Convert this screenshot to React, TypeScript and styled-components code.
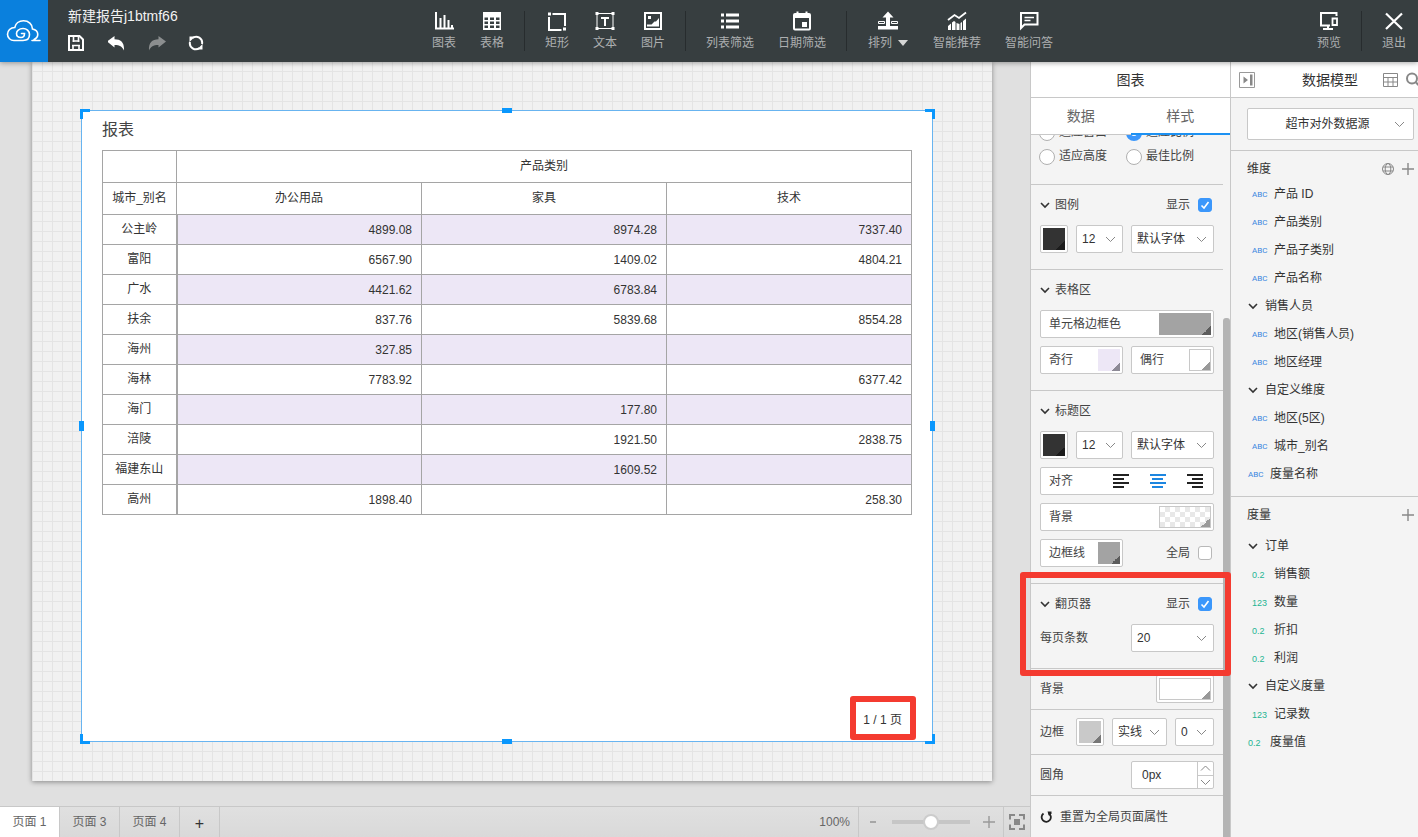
import React from "react";
import styled, { createGlobalStyle, css } from "styled-components";

const GlobalStyle = createGlobalStyle`
  * { box-sizing: border-box; }
  body {
    margin: 0;
    font-family: "Liberation Sans", "Noto Sans CJK SC", sans-serif;
    font-size: 12px;
    color: #444;
  }
  button, input, select { font: inherit; color: inherit; margin: 0; }
  button { border: 0; padding: 0; background: none; cursor: pointer; }
  h1, h2, h3, ul { margin: 0; padding: 0; font-weight: normal; }
  ul { list-style: none; }
`;

const line = "#c8c8c8";
const blue = "#1c91f2";

/* ---------- frame ---------- */

const Shell = styled.div`
  display: flex;
  flex-direction: column;
  height: 100vh;
  overflow: hidden;
  background: #e0e0e0;
`;

const TopBar = styled.header`
  display: flex;
  flex: none;
  height: 62px;
  background: #373e40;
  box-shadow: 0 1px 5px rgba(0, 0, 0, 0.35);
  position: relative;
  z-index: 5;
`;

const Body = styled.div`
  display: flex;
  flex: 1;
  min-height: 0;
`;

/* ---------- top bar ---------- */

const Logo = styled.a`
  display: flex;
  align-items: center;
  justify-content: center;
  flex: none;
  width: 48px;
  background: #0a80dd;
`;

const ReportBox = styled.div`
  display: flex;
  flex-direction: column;
  width: 372px;
  padding: 7px 20px 0;
`;

const ReportName = styled.h1`
  font-size: 14px;
  line-height: 18px;
  color: #f2f2f2;
`;

const QuickActions = styled.div`
  display: flex;
  gap: 20px;
  margin-top: 8px;
`;

const QuickButton = styled.button`
  display: flex;
  width: 20px;
  height: 20px;
  align-items: center;
  color: ${(p) => (p.disabled ? "#8b8e8f" : "#fff")};
`;

const Tools = styled.div`
  display: flex;
  align-items: center;
`;

const Spacer = styled.div`
  flex: 1;
`;

const ToolButton = styled.button<{ $width: number }>`
  display: flex;
  flex-direction: column;
  align-items: center;
  gap: 3px;
  width: ${(p) => p.$width}px;
  height: 42px;
  padding-top: 1px;
  color: #fff;
`;

const ToolLabel = styled.span`
  display: flex;
  align-items: center;
  gap: 6px;
  line-height: 18px;
  color: #adafb0;
  white-space: nowrap;
`;

const Caret = styled.i`
  border: 5px solid transparent;
  border-top: 6px solid #d5d6d6;
  border-bottom: 0;
`;

const ToolDivider = styled.i`
  width: 1px;
  height: 40px;
  margin: 0 8px;
  background: #272c2e;
`;

/* ---------- canvas ---------- */

const Workspace = styled.main`
  display: flex;
  flex-direction: column;
  flex: 1;
  min-width: 0;
`;

const Stage = styled.div`
  flex: 1;
  min-height: 0;
  padding: 0 38px 25px 32px;
  display: flex;
`;

const ReportPage = styled.section`
  display: flex;
  flex: 1;
  padding: 48px 59px 39px 49px;
  background-color: #f1f1f1;
  background-image: linear-gradient(#e4e4e4 1px, transparent 1px),
    linear-gradient(90deg, #e4e4e4 1px, transparent 1px);
  background-size: 10px 10px;
  background-position: 0 9px;
  box-shadow: 0 1px 5px rgba(0, 0, 0, 0.4);
`;

const Widget = styled.article`
  position: relative;
  display: flex;
  flex-direction: column;
  flex: 1;
  padding: 9px 20px 2px;
  background: #fff;
  border: 1px solid #68b4f0;
`;

const WidgetTitle = styled.h2`
  font-size: 16px;
  line-height: 20px;
  color: #444;
`;

type Spot = "nw" | "n" | "ne" | "e" | "se" | "s" | "sw" | "w";

const spots: Record<Spot, ReturnType<typeof css>> = {
  nw: css`top: -2px; left: -2px; width: 10px; height: 10px; border-width: 3px 0 0 3px;`,
  ne: css`top: -2px; right: -3px; width: 10px; height: 10px; border-width: 3px 3px 0 0;`,
  sw: css`bottom: -3px; left: -2px; width: 10px; height: 10px; border-width: 0 0 3px 3px;`,
  se: css`bottom: -3px; right: -3px; width: 10px; height: 10px; border-width: 0 3px 3px 0;`,
  n: css`top: -3px; left: calc(50% - 5px); width: 10px; height: 5px; background: #0a97fd;`,
  s: css`bottom: -3px; left: calc(50% - 5px); width: 10px; height: 5px; background: #0a97fd;`,
  w: css`left: -3px; top: calc(50% - 5px); width: 5px; height: 10px; background: #0a97fd;`,
  e: css`right: -3px; top: calc(50% - 5px); width: 5px; height: 10px; background: #0a97fd;`,
};

const Handle = styled.i<{ $spot: Spot }>`
  position: absolute;
  border: 0 solid #0a97fd;
  ${(p) => spots[p.$spot]}
`;

const DataTable = styled.table`
  width: 100%;
  margin-top: 10px;
  table-layout: fixed;
  border-collapse: collapse;
  color: #333;

  th, td {
    padding: 0;
    border: 1px solid #a5a5a5;
    font-weight: normal;
    line-height: 16px;
  }
  thead tr { height: 32px; }
  tbody tr { height: 30px; }
  tbody tr:nth-child(odd) td { background: #ede7f6; }
  th { padding-bottom: 2px; }
  td {
    padding-right: 9px;
    text-align: right;
  }
  td:first-of-type { border-left-width: 2px; }
`;

const NameCol = styled.col`
  width: 74px;
`;

const Pager = styled.div`
  position: relative;
  align-self: flex-end;
  margin: auto -5px -2px 0;
  padding: 15px 13px 11px 12px;
  border: 2px solid transparent;
  line-height: 16px;
  color: #333;
`;

const PagerMark = styled.i`
  position: absolute;
  inset: -1px;
  border: 6px solid #f43b30;
  border-radius: 3px;
`;

/* ---------- bottom bar ---------- */

const BottomBar = styled.footer`
  display: flex;
  flex: none;
  height: 31px;
  border-top: 1px solid ${line};
  background: linear-gradient(#e0e0e0, #d9d9d9);
`;

const PageTab = styled.button<{ $active?: boolean }>`
  width: 60px;
  border-right: 1px solid ${line};
  background: ${(p) => (p.$active ? "#fff" : "transparent")};
  line-height: 16px;
  color: #666;
`;

const AddTab = styled(PageTab)`
  width: 40px;
  padding-top: 4px;
  font-size: 16px;
  color: #333;
`;

const ZoomValue = styled.span`
  padding: 0 8px;
  line-height: 31px;
  color: #666;
`;

const ZoomBox = styled.div`
  display: flex;
  align-items: center;
  justify-content: space-between;
  width: 146px;
  padding: 0 8px;
  border: solid ${line};
  border-width: 0 1px;
`;

const ZoomButton = styled.button`
  display: flex;
  justify-content: center;
  width: 12px;
  color: #999;
`;

const ZoomRange = styled.input`
  appearance: none;
  width: 78px;
  height: 16px;
  background: linear-gradient(#c6c6c6, #c6c6c6) center / 100% 4px no-repeat;

  &::-webkit-slider-thumb {
    appearance: none;
    width: 16px;
    height: 16px;
    border: 2px solid #ccc;
    border-radius: 8px;
    background: #fff;
  }
`;

const FitButton = styled.button`
  display: flex;
  align-items: center;
  justify-content: center;
  width: 26px;
`;

/* ---------- chart panel ---------- */

const ChartPanel = styled.aside`
  position: relative;
  z-index: 2;
  display: flex;
  flex-direction: column;
  flex: none;
  width: 200px;
  border-left: 1px solid ${line};
  background: #f4f4f4;
`;

const PanelHeader = styled.header`
  display: flex;
  align-items: center;
  justify-content: center;
  flex: none;
  height: 36px;
  border-bottom: 1px solid ${line};
  background: #fff;
  font-size: 14px;
  line-height: 18px;
  color: #333;
`;

const Tabs = styled.div`
  display: flex;
  flex: none;
  height: 37px;
  background: #fff;
`;

const Tab = styled.button<{ $active?: boolean }>`
  flex: 1;
  padding-bottom: ${(p) => (p.$active ? 1 : 2)}px;
  border-bottom: ${(p) => (p.$active ? `2px solid ${blue}` : `1px solid ${line}`)};
  font-size: 14px;
  color: #666;
`;

const ScrollArea = styled.div`
  display: flex;
  flex: 1;
  min-height: 0;
  overflow: hidden;
`;

const Settings = styled.div`
  display: flex;
  flex-direction: column;
  justify-content: flex-end;
  flex: 1;
`;

const ScrollTrack = styled.div`
  display: flex;
  align-items: flex-end;
  width: 7px;
`;

const ScrollThumb = styled.i`
  width: 7px;
  height: 74%;
  border-radius: 3px 3px 0 0;
  background: #b4b4b4;
`;

const Section = styled.section`
  display: flex;
  flex-direction: column;
  flex: none;
  gap: 8px;
  padding: 8px 9px 16px;
  border-bottom: 1px solid ${line};
`;

const RadioGrid = styled.section`
  display: grid;
  grid-template-columns: 87px 87px;
  flex: none;
  padding: 0 8px 15px;
  border-bottom: 1px solid ${line};
`;

const RadioLabel = styled.label`
  display: flex;
  gap: 4px;
  height: 24px;
  align-items: center;
  line-height: 20px;
  white-space: nowrap;

  span { padding-bottom: 2px; }
`;

const Radio = styled.input`
  appearance: none;
  flex: none;
  width: 16px;
  height: 16px;
  border: 1px solid #b0b0b0;
  border-radius: 8px;
  background: #fff;

  &:checked {
    border: 5px solid #3b97fb;
  }
`;

const SectionHead = styled.div`
  display: flex;
  align-items: center;
  justify-content: space-between;
  height: 24px;
`;

const Toggle = styled.button`
  display: flex;
  align-items: center;
  gap: 5px;
  line-height: 16px;
`;

const CheckLabel = styled.label`
  display: flex;
  align-items: center;
  gap: 8px;
  margin-right: 2px;
  line-height: 16px;
`;

const CheckBox = styled.span`
  position: relative;
  display: flex;

  input {
    appearance: none;
    width: 14px;
    height: 14px;
    border: 1px solid #b8b8b8;
    border-radius: 3px;
    background: #fff;
  }
  input:checked {
    border-color: #3b97fb;
    background: #3b97fb;
  }
  svg { position: absolute; inset: 0; }
`;

const Row = styled.div`
  display: flex;
  align-items: center;
  gap: 8px;
  justify-content: space-between;
`;

const RowText = styled.span`
  line-height: 16px;
`;

const FlatRow = styled(Row)<{ $height: number }>`
  flex: none;
  height: ${(p) => p.$height}px;
  padding: 0 9px;
  border-bottom: 1px solid ${line};
`;

const boxed = css`
  border: 1px solid ${line};
  border-radius: 2px;
  background: #fff;
`;

const ColorButton = styled.button<{ $width?: number }>`
  ${boxed}
  display: flex;
  align-items: center;
  justify-content: space-between;
  flex: ${(p) => (p.$width ? "none" : "1")};
  width: ${(p) => (p.$width ? `${p.$width}px` : "auto")};
  height: 28px;
  padding: 2px;
`;

const ColorText = styled(RowText)`
  padding-left: 6px;
  white-space: nowrap;
`;

const Swatch = styled.i<{ $fill: string; $corner: string; $wide?: boolean; $edge?: boolean }>`
  width: ${(p) => (p.$wide ? 52 : 22)}px;
  height: 22px;
  border: ${(p) => (p.$edge ? `1px solid ${line}` : "0")};
  background: linear-gradient(135deg, transparent 50%, ${(p) => p.$corner} 50%) bottom right / 9px 9px no-repeat,
    ${(p) => p.$fill};
`;

const SelectWrap = styled.span<{ $width: number; $inset: number }>`
  position: relative;
  display: flex;
  flex: none;
  width: ${(p) => p.$width}px;

  svg {
    position: absolute;
    right: ${(p) => p.$inset}px;
    top: 50%;
    transform: translateY(-50%);
    pointer-events: none;
  }
`;

const NativeSelect = styled.select<{ $centered?: boolean }>`
  ${boxed}
  appearance: none;
  width: 100%;
  height: ${(p) => (p.$centered ? 32 : 28)}px;
  padding: ${(p) => (p.$centered ? "0 8px 0 2px" : "0 5px")};
  color: #333;
  text-align-last: ${(p) => (p.$centered ? "center" : "left")};
`;

const AlignBox = styled.div`
  ${boxed}
  display: flex;
  align-items: center;
  height: 28px;
  padding: 0 10px 0 8px;

  span { flex: 1; }
`;

const AlignButton = styled.button<{ $active?: boolean }>`
  display: flex;
  margin-left: 21px;
  color: ${(p) => (p.$active ? "#1d86e0" : "#222")};
`;

const NumberBox = styled.div`
  ${boxed}
  display: flex;
  width: 83px;
  height: 28px;
`;

const NumberInput = styled.input`
  flex: 1;
  min-width: 0;
  padding: 0 10px;
  border: 0;
  background: none;
  color: #333;
`;

const Steps = styled.span`
  display: flex;
  flex-direction: column;
  width: 16px;
  border-left: 1px solid ${line};
`;

const StepButton = styled.button`
  display: flex;
  flex: 1;
  align-items: center;
  justify-content: center;

  & + & { border-top: 1px solid ${line}; }
`;

const ResetButton = styled.button`
  display: flex;
  align-items: center;
  flex: none;
  gap: 8px;
  height: 41px;
  padding: 0 9px;
`;

const SectionMark = styled.i`
  position: absolute;
  left: -11px;
  right: -1px;
  bottom: 161px;
  height: 104px;
  border: 6px solid #f43b30;
  border-radius: 3px;
  pointer-events: none;
`;

/* ---------- model panel ---------- */

const ModelPanel = styled.aside`
  display: flex;
  flex-direction: column;
  flex: none;
  width: 188px;
  border-left: 1px solid ${line};
  background: #f4f4f4;
  overflow: hidden;
`;

const ModelHeader = styled(PanelHeader)`
  justify-content: flex-start;
  padding-left: 8px;
  overflow: hidden;

  h2 { flex: 1; padding-left: 22px; font-size: 14px; text-align: center; }
  button { display: flex; flex: none; }
`;

const HeaderIcons = styled.div`
  display: flex;
  gap: 7px;
  margin-right: -4px;
`;

const SourceRow = styled.div`
  padding: 10px 4px 10px 16px;
  border-bottom: 1px solid ${line};
`;

const GroupHead = styled.div<{ $height: number }>`
  display: flex;
  align-items: center;
  gap: 8px;
  height: ${(p) => p.$height}px;
  padding: 0 4px 0 16px;
  color: #333;

  h3 { flex: 1; font-size: 12px; line-height: 16px; }
  button { display: flex; color: #888; }
`;

const FirstGroupHead = styled(GroupHead)`
  padding-top: 6px;
`;

const FieldList = styled.ul`
  padding-bottom: 8px;

  & + ${GroupHead} { border-top: 1px solid ${line}; }
`;

const FieldRow = styled.li<{ $top?: boolean }>`
  display: flex;
  align-items: center;
  height: 28px;
  padding-left: ${(p) => (p.$top ? 17 : 21)}px;
  line-height: 16px;
  color: #333;
  white-space: nowrap;
`;

const Tag = styled.span<{ $measure?: boolean }>`
  width: 22px;
  padding-top: 1px;
  font-family: ${(p) => (p.$measure ? "Liberation Sans" : "Roboto")}, sans-serif;
  font-size: ${(p) => (p.$measure ? 9 : 8)}px;
  color: ${(p) => (p.$measure ? "#1fb493" : "#3a85e0")};
`;

const FolderButton = styled.button`
  display: flex;
  align-items: center;
  gap: 7px;
  margin-left: -4px;
  line-height: 16px;
`;

/* ---------- drawings ---------- */

const Svg = ({ w, h = w, children }: { w: number; h?: number; children: React.ReactNode }) => (
  <svg width={w} height={h} viewBox={`0 0 ${w} ${h}`} fill="none" stroke="currentColor" aria-hidden="true">
    {children}
  </svg>
);

const CloudLogo = () => (
  <svg width="36" height="24" viewBox="0 0 36 24" fill="none" stroke="#fff" strokeWidth="1.6" strokeLinecap="round" aria-hidden="true">
    <path d="M26 21.500H34M28 20.500C33 18.500 33.500 11.500 26.500 10C26.500 5 22.500 1.800 17.500 1.800C13 1.800 9.500 4.500 8.800 8.500C4.500 8.500 1.500 11.500 1.500 15.200C1.500 19 4.500 21.500 8 21.500H17C21.500 21.500 23.500 18.800 23.500 15.500C23.500 12 20.500 9.500 17 9.500C13 9.500 10.500 12 10.500 14.500C10.500 17 12.500 18.500 15 18.500C17.500 18.500 18.500 17 18.500 14.500H15.500" />
  </svg>
);

const SaveIcon = () => (
  <Svg w={16}>
    <path d="M1 1H11.500L15 4.500V15H1Z" strokeWidth="2" />
    <path d="M5.500 1V7M10.500 1V7M4.500 6H11.500M5 10V15M11 10V15M4 10.500H12" strokeWidth="1.6" />
  </Svg>
);

const UndoIcon = () => (
  <Svg w={18} h={16}>
    <path d="M-1 6.500L6.500 1V4.200C13 4.200 16.500 7.500 16 15.500C14 11.500 12 10 6.500 10V12.500Z" fill="currentColor" stroke="none" />
  </Svg>
);

const RedoIcon = () => (
  <Svg w={18} h={16}>
    <path d="M18 6.500L10.500 1V4.200C4 4.200 0.500 7.500 1 15.500C3 11.500 5 10 10.500 10V12.500Z" fill="currentColor" stroke="none" />
  </Svg>
);

const RefreshIcon = () => (
  <Svg w={16}>
    <path d="M4.500 3A6 6 0 0 1 14 9M11.500 13A6 6 0 0 1 2 7" strokeWidth="2" />
    <path d="M1.500 1.500H7L1.500 7ZM14.500 14.500H9L14.500 9Z" fill="currentColor" stroke="none" />
  </Svg>
);

const ChartIcon = () => (
  <Svg w={20}>
    <path d="M2 1V17.500H20M6.500 7V17M10.500 4V17M14.500 9V17M18 14V17" strokeWidth="2" />
  </Svg>
);

const GridIcon = () => (
  <Svg w={20}>
    <path d="M1 1H19V19H1ZM2.500 6.500V9H6V6.500ZM8 6.500V9H12V6.500ZM14 6.500V9H17.500V6.500ZM2.500 10.500V13H6V10.500ZM8 10.500V13H12V10.500ZM14 10.500V13H17.500V10.500ZM2.500 14.500V17H6V14.500ZM8 14.500V17H12V14.500ZM14 14.500V17H17.500V14.500Z" fill="currentColor" fillRule="evenodd" stroke="none" />
  </Svg>
);

const RectIcon = () => (
  <Svg w={20}>
    <path d="M5.500 3H18V15M14.500 19H2V6" strokeWidth="2" />
    <path d="M1 1.500H4V4.500H1ZM16 16.500H19V19.500H16Z" fill="currentColor" stroke="none" />
  </Svg>
);

const TextIcon = () => (
  <Svg w={20}>
    <path d="M2 2.500H18V17.500H2Z" />
    <path d="M0.500 1H3.500V4H0.500ZM16.500 1H19.500V4H16.500ZM0.500 16H3.500V19H0.500ZM16.500 16H19.500V19H16.500Z" fill="currentColor" stroke="none" />
    <path d="M6 7H14M10 7V15" strokeWidth="2" />
  </Svg>
);

const ImageIcon = () => (
  <Svg w={20}>
    <path d="M2 2H18V18H2Z" strokeWidth="2" />
    <path d="M4 13.500H8.500L11.500 10.500H13L16 7V15.500H4ZM5 5H8V8H5Z" fill="currentColor" stroke="none" />
  </Svg>
);

const ListIcon = () => (
  <Svg w={20}>
    <path d="M1 4H4M6 4H19M1 10H4M6 10H19M1 16H4M6 16H19" strokeWidth="3" />
  </Svg>
);

const CalendarIcon = () => (
  <Svg w={20}>
    <path d="M3 2H4.500V0.500H6.500V2H13.500V0.500H15.500V2H17Q19 2 19 4V17.500Q19 19.500 17 19.500H3Q1 19.500 1 17.500V4Q1 2 3 2ZM3 7V17.500H17V7ZM10 11H15V16H10Z" fill="currentColor" fillRule="evenodd" stroke="none" />
  </Svg>
);

const ArrangeIcon = () => (
  <Svg w={20}>
    <path d="M10 0.500L15.500 6.500H12V15H20V18.500H0V15H8V6.500H4.500Z" fill="currentColor" stroke="none" />
    <path d="M0.500 10.500H6.500V12.500H0.500ZM13.500 10.500H19.500V12.500H13.500Z" />
  </Svg>
);

const TrendIcon = () => (
  <Svg w={20}>
    <path d="M1 9L7.500 4L12 7L19 1.500" strokeWidth="1.800" />
    <path d="M1 15L4 12.500V19H1ZM5 11.500L7 10L8.500 11V19H5ZM9.500 12L12.500 13V19H9.500ZM13.500 12L15 11V19H13.500ZM16 10L19 7.500V19H16Z" fill="currentColor" stroke="none" />
  </Svg>
);

const ChatIcon = () => (
  <Svg w={20}>
    <path d="M2 17V2H18.500V13.500H5.500Z" strokeWidth="2" />
    <path d="M5.500 6.500H15M5.500 9.500H11.500" strokeWidth="1.600" />
  </Svg>
);

const PreviewIcon = () => (
  <Svg w={20}>
    <path d="M17.500 5V2H2V14.500H11M9 14V18M4 18H14" strokeWidth="2" />
    <path d="M13.500 7.500H18V14H13.500Z" strokeWidth="1.800" />
  </Svg>
);

const CloseIcon = () => (
  <Svg w={20}>
    <path d="M2 2.500L18 18M18 2.500L2 18" strokeWidth="2.200" />
  </Svg>
);

const Chevron = ({ bold, up }: { bold?: boolean; up?: boolean }) =>
  bold ? (
    <Svg w={10} h={8}>
      <path d="M1 2L5 6L9 2" stroke="#333" strokeWidth="1.600" />
    </Svg>
  ) : (
    <Svg w={11} h={8}>
      <path d={up ? "M1 6.500L5.500 2L10 6.500" : "M1 2L5.500 6.500L10 2"} stroke="#888" />
    </Svg>
  );

const PlusIcon = () => (
  <Svg w={12}>
    <path d="M6 0V12M0 6H12" strokeWidth="1.400" />
  </Svg>
);

const GlobeIcon = () => (
  <Svg w={12}>
    <circle cx="6" cy="6" r="5.500" />
    <ellipse cx="6" cy="6" rx="2.800" ry="5.500" />
    <path d="M1 4H11M1 8H11" />
  </Svg>
);

const CollapseIcon = () => (
  <Svg w={16}>
    <path d="M0.500 0.500H15.500V15.500H0.500Z" stroke="#999" />
    <path d="M4.500 4.500L9 8L4.500 11.500ZM11 2.500H13.500V13.500H11Z" fill="#888" stroke="none" />
  </Svg>
);

const SheetIcon = () => (
  <Svg w={16}>
    <path d="M0.500 1.500H14.500V14.500H0.500ZM0.500 5.500H14.500M0.500 10H14.500M5 5.500V14.500M10 5.500V14.500" stroke="#888" />
  </Svg>
);

const SearchIcon = () => (
  <Svg w={16}>
    <circle cx="6" cy="6.500" r="5" stroke="#888" strokeWidth="2" />
    <path d="M10 10.500L14 14.500" stroke="#888" strokeWidth="2" />
  </Svg>
);

const FitIcon = () => (
  <Svg w={16}>
    <path d="M6 1H1V5.500M10 1H15V5.500M6 15H1V10.500M10 15H15V10.500" stroke="#888" strokeWidth="2" />
    <path d="M5 5H11V11H5Z" fill="#888" stroke="none" />
  </Svg>
);

const ResetIcon = () => (
  <Svg w={12}>
    <path d="M3.500 2.500A4.600 4.600 0 1 0 8.500 2.200" stroke="#222" strokeWidth="1.800" />
    <path d="M7.500 0.500H11.500V2.500L9 5Z" fill="#222" stroke="none" />
  </Svg>
);

const AlignIcon = ({ shift }: { shift: number }) => (
  <Svg w={16} h={14}>
    <path d={`M0 1H16M${shift} 5H${shift + 11}M0 9H16M${shift} 13H${shift + 11}`} strokeWidth="2" />
  </Svg>
);

/* ---------- composed controls ---------- */

const Tool = ({ icon, label, width, caret }: { icon: React.ReactNode; label: string; width: number; caret?: boolean }) => (
  <ToolButton type="button" $width={width}>
    {icon}
    <ToolLabel>
      {label}
      {caret && <Caret />}
    </ToolLabel>
  </ToolButton>
);

const Select = ({ label, value, width, centered }: { label: string; value: string; width: number; centered?: boolean }) => (
  <SelectWrap $width={width} $inset={centered ? 9 : 7}>
    <NativeSelect aria-label={label} defaultValue={value} $centered={centered}>
      <option>{value}</option>
    </NativeSelect>
    <Chevron />
  </SelectWrap>
);

const Check = ({ label, checked }: { label: string; checked?: boolean }) => (
  <CheckLabel>
    {label}
    <CheckBox>
      <input type="checkbox" defaultChecked={checked} />
      {checked && (
        <Svg w={14}>
          <path d="M3.500 7.500L6 10L10.500 4" stroke="#fff" strokeWidth="1.600" />
        </Svg>
      )}
    </CheckBox>
  </CheckLabel>
);

const Head = ({ title, children }: { title: string; children?: React.ReactNode }) => (
  <SectionHead>
    <Toggle type="button">
      <Chevron bold />
      {title}
    </Toggle>
    {children}
  </SectionHead>
);

const FontRow = () => (
  <Row>
    <ColorButton type="button" $width={28} aria-label="文字颜色">
      <Swatch $fill="#333" $corner="#1c1c1c" />
    </ColorButton>
    <Select label="字号" value="12" width={47} />
    <Select label="字体" value="默认字体" width={83} />
  </Row>
);

const columns = ["办公用品", "家具", "技术"];
const rows: [string, string, string, string][] = [
  ["公主岭", "4899.08", "8974.28", "7337.40"],
  ["富阳", "6567.90", "1409.02", "4804.21"],
  ["广水", "4421.62", "6783.84", ""],
  ["扶余", "837.76", "5839.68", "8554.28"],
  ["海州", "327.85", "", ""],
  ["海林", "7783.92", "", "6377.42"],
  ["海门", "", "177.80", ""],
  ["涪陵", "", "1921.50", "2838.75"],
  ["福建东山", "", "1609.52", ""],
  ["高州", "1898.40", "", "258.30"],
];

type Field = { tag?: string; name: string; top?: boolean };

const dimensions: Field[] = [
  { tag: "ABC", name: "产品 ID" },
  { tag: "ABC", name: "产品类别" },
  { tag: "ABC", name: "产品子类别" },
  { tag: "ABC", name: "产品名称" },
  { name: "销售人员" },
  { tag: "ABC", name: "地区(销售人员)" },
  { tag: "ABC", name: "地区经理" },
  { name: "自定义维度" },
  { tag: "ABC", name: "地区(5区)" },
  { tag: "ABC", name: "城市_别名" },
  { tag: "ABC", name: "度量名称", top: true },
];

const measures: Field[] = [
  { name: "订单" },
  { tag: "0.2", name: "销售额" },
  { tag: "123", name: "数量" },
  { tag: "0.2", name: "折扣" },
  { tag: "0.2", name: "利润" },
  { name: "自定义度量" },
  { tag: "123", name: "记录数" },
  { tag: "0.2", name: "度量值", top: true },
];

const Fields = ({ items }: { items: Field[] }) => (
  <FieldList>
    {items.map((f) => (
      <FieldRow key={f.name} $top={f.top}>
        {f.tag ? (
          <>
            <Tag $measure={f.tag !== "ABC"}>{f.tag}</Tag>
            {f.name}
          </>
        ) : (
          <FolderButton type="button">
            <Chevron bold />
            {f.name}
          </FolderButton>
        )}
      </FieldRow>
    ))}
  </FieldList>
);

const checker = "repeating-conic-gradient(#e8e8e8 0 25%, #fff 0 50%) 0 0 / 10px 10px";

export default function App() {
  return (
    <>
      <GlobalStyle />
      <Shell>
        <TopBar>
          <Logo href="#" aria-label="首页">
            <CloudLogo />
          </Logo>
          <ReportBox>
            <ReportName>新建报告j1btmf66</ReportName>
            <QuickActions>
              <QuickButton type="button" aria-label="保存"><SaveIcon /></QuickButton>
              <QuickButton type="button" aria-label="撤销"><UndoIcon /></QuickButton>
              <QuickButton type="button" aria-label="重做" disabled><RedoIcon /></QuickButton>
              <QuickButton type="button" aria-label="刷新"><RefreshIcon /></QuickButton>
            </QuickActions>
          </ReportBox>
          <Tools>
            <Tool icon={<ChartIcon />} label="图表" width={48} />
            <Tool icon={<GridIcon />} label="表格" width={48} />
            <ToolDivider />
            <Tool icon={<RectIcon />} label="矩形" width={48} />
            <Tool icon={<TextIcon />} label="文本" width={48} />
            <Tool icon={<ImageIcon />} label="图片" width={48} />
            <ToolDivider />
            <Tool icon={<ListIcon />} label="列表筛选" width={72} />
            <Tool icon={<CalendarIcon />} label="日期筛选" width={72} />
            <ToolDivider />
            <Tool icon={<ArrangeIcon />} label="排列" width={66} caret />
            <Tool icon={<TrendIcon />} label="智能推荐" width={72} />
            <Tool icon={<ChatIcon />} label="智能问答" width={72} />
          </Tools>
          <Spacer />
          <Tools>
            <Tool icon={<PreviewIcon />} label="预览" width={48} />
            <ToolDivider />
            <Tool icon={<CloseIcon />} label="退出" width={48} />
          </Tools>
        </TopBar>

        <Body>
          <Workspace>
            <Stage>
              <ReportPage>
                <Widget>
                  <WidgetTitle>报表</WidgetTitle>
                  <DataTable>
                    <colgroup>
                      <NameCol />
                      <col />
                      <col />
                      <col />
                    </colgroup>
                    <thead>
                      <tr>
                        <th />
                        <th colSpan={3}>产品类别</th>
                      </tr>
                      <tr>
                        <th>城市_别名</th>
                        {columns.map((c) => (
                          <th key={c}>{c}</th>
                        ))}
                      </tr>
                    </thead>
                    <tbody>
                      {rows.map(([name, ...values]) => (
                        <tr key={name}>
                          <th>{name}</th>
                          {values.map((v, i) => (
                            <td key={i}>{v}</td>
                          ))}
                        </tr>
                      ))}
                    </tbody>
                  </DataTable>
                  <Pager>
                    1 / 1 页
                    <PagerMark />
                  </Pager>
                  {(Object.keys(spots) as Spot[]).map((s) => (
                    <Handle key={s} $spot={s} />
                  ))}
                </Widget>
              </ReportPage>
            </Stage>
            <BottomBar>
              <PageTab type="button" $active>页面 1</PageTab>
              <PageTab type="button">页面 3</PageTab>
              <PageTab type="button">页面 4</PageTab>
              <AddTab type="button" aria-label="新增页面">+</AddTab>
              <Spacer />
              <ZoomValue>100%</ZoomValue>
              <ZoomBox>
                <ZoomButton type="button" aria-label="缩小">
                  <Svg w={6} h={12}><path d="M0 6H6" strokeWidth="1.600" /></Svg>
                </ZoomButton>
                <ZoomRange type="range" aria-label="缩放" min={0} max={200} defaultValue={100} />
                <ZoomButton type="button" aria-label="放大"><PlusIcon /></ZoomButton>
              </ZoomBox>
              <FitButton type="button" aria-label="适应屏幕"><FitIcon /></FitButton>
            </BottomBar>
          </Workspace>

          <ChartPanel>
            <PanelHeader>图表</PanelHeader>
            <Tabs>
              <Tab type="button">数据</Tab>
              <Tab type="button" $active>样式</Tab>
            </Tabs>
            <ScrollArea>
              <Settings>
                <RadioGrid>
                  {["适应窗口", "适应比例", "适应高度", "最佳比例"].map((label) => (
                    <RadioLabel key={label}>
                      <Radio type="radio" name="fit" defaultChecked={label === "适应比例"} />
                      <span>{label}</span>
                    </RadioLabel>
                  ))}
                </RadioGrid>
                <Section>
                  <Head title="图例"><Check label="显示" checked /></Head>
                  <FontRow />
                </Section>
                <Section>
                  <Head title="表格区" />
                  <Row>
                    <ColorButton type="button">
                      <ColorText>单元格边框色</ColorText>
                      <Swatch $wide $fill="#a3a3a3" $corner="#5c5c5c" />
                    </ColorButton>
                  </Row>
                  <Row>
                    <ColorButton type="button">
                      <ColorText>奇行</ColorText>
                      <Swatch $fill="#ede7f6" $corner="#8d8a96" />
                    </ColorButton>
                    <ColorButton type="button">
                      <ColorText>偶行</ColorText>
                      <Swatch $edge $fill="#fff" $corner="#999" />
                    </ColorButton>
                  </Row>
                </Section>
                <Section>
                  <Head title="标题区" />
                  <FontRow />
                  <AlignBox>
                    <RowText>对齐</RowText>
                    <AlignButton type="button" aria-label="左对齐"><AlignIcon shift={0} /></AlignButton>
                    <AlignButton type="button" aria-label="居中" $active><AlignIcon shift={2} /></AlignButton>
                    <AlignButton type="button" aria-label="右对齐"><AlignIcon shift={5} /></AlignButton>
                  </AlignBox>
                  <Row>
                    <ColorButton type="button">
                      <ColorText>背景</ColorText>
                      <Swatch $wide $edge $fill={checker} $corner="#999" />
                    </ColorButton>
                  </Row>
                  <Row>
                    <ColorButton type="button" $width={83}>
                      <ColorText>边框线</ColorText>
                      <Swatch $fill="#a3a3a3" $corner="#5c5c5c" />
                    </ColorButton>
                    <Check label="全局" />
                  </Row>
                </Section>
                <Section>
                  <Head title="翻页器"><Check label="显示" checked /></Head>
                  <Row>
                    <RowText>每页条数</RowText>
                    <Select label="每页条数" value="20" width={83} />
                  </Row>
                </Section>
                <FlatRow $height={41}>
                  <RowText>背景</RowText>
                  <ColorButton type="button" $width={58} aria-label="背景颜色">
                    <Swatch $wide $edge $fill="#fff" $corner="#999" />
                  </ColorButton>
                </FlatRow>
                <FlatRow $height={45}>
                  <RowText>边框</RowText>
                  <Row>
                    <ColorButton type="button" $width={28} aria-label="边框颜色">
                      <Swatch $fill="#c9c9c9" $corner="#777" />
                    </ColorButton>
                    <Select label="线型" value="实线" width={55} />
                    <Select label="边框宽度" value="0" width={39} />
                  </Row>
                </FlatRow>
                <FlatRow $height={41}>
                  <RowText>圆角</RowText>
                  <NumberBox>
                    <NumberInput aria-label="圆角" defaultValue="0px" />
                    <Steps>
                      <StepButton type="button" aria-label="增加"><Chevron up /></StepButton>
                      <StepButton type="button" aria-label="减少"><Chevron /></StepButton>
                    </Steps>
                  </NumberBox>
                </FlatRow>
                <ResetButton type="button">
                  <ResetIcon />
                  <RowText>重置为全局页面属性</RowText>
                </ResetButton>
              </Settings>
              <ScrollTrack>
                <ScrollThumb />
              </ScrollTrack>
            </ScrollArea>
            <SectionMark />
          </ChartPanel>

          <ModelPanel>
            <ModelHeader>
              <button type="button" aria-label="收起"><CollapseIcon /></button>
              <h2>数据模型</h2>
              <HeaderIcons>
                <button type="button" aria-label="数据表"><SheetIcon /></button>
                <button type="button" aria-label="搜索"><SearchIcon /></button>
              </HeaderIcons>
            </ModelHeader>
            <SourceRow>
              <Select label="数据源" value="超市对外数据源" width={167} centered />
            </SourceRow>
            <FirstGroupHead $height={29}>
              <h3>维度</h3>
              <button type="button" aria-label="地理字段"><GlobeIcon /></button>
              <button type="button" aria-label="新增维度"><PlusIcon /></button>
            </FirstGroupHead>
            <Fields items={dimensions} />
            <GroupHead $height={36}>
              <h3>度量</h3>
              <button type="button" aria-label="新增度量"><PlusIcon /></button>
            </GroupHead>
            <Fields items={measures} />
          </ModelPanel>
        </Body>
      </Shell>
    </>
  );
}
